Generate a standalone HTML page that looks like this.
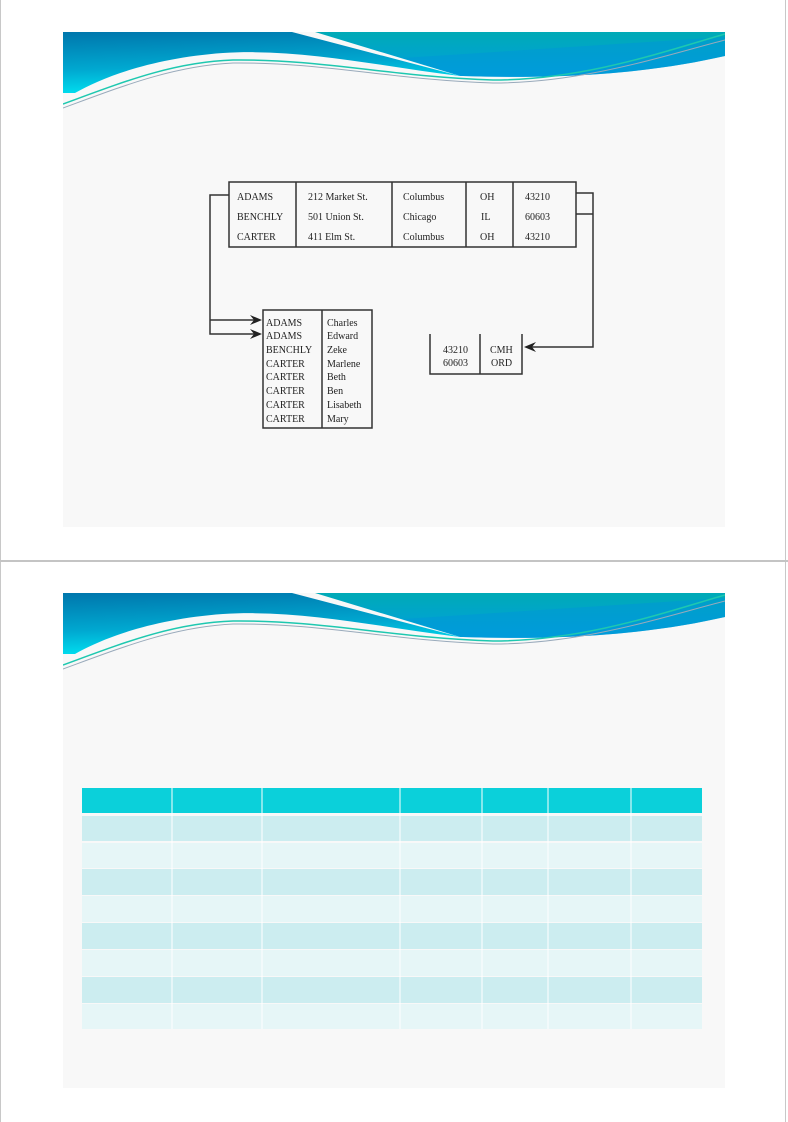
<!DOCTYPE html>
<html><head><meta charset="utf-8"><style>
html,body{margin:0;padding:0;background:#fff;}
body{width:788px;height:1122px;position:relative;overflow:hidden;font-family:"Liberation Serif",serif;}
.abs{position:absolute;}
</style></head><body>
<div class="abs" style="left:0;top:0;width:1px;height:1122px;background:#c8c8c8"></div>
<div class="abs" style="left:785px;top:0;width:1px;height:1122px;background:#c8c8c8"></div>
<div class="abs" style="left:0;top:560px;width:788px;height:2px;background:#c4c4c4"></div>

<div class="abs" style="left:63px;top:32px;width:662px;height:495px;background:#f8f8f8"></div>
<div class="abs" style="left:63px;top:593px;width:662px;height:495px;background:#f8f8f8"></div>

<svg class="abs" style="left:63px;top:32px" width="662" height="80" viewBox="0 0 662 80">
<defs>
<linearGradient id="gl" x1="0" y1="0" x2="0.2" y2="1"><stop offset="0" stop-color="#0076ac"/><stop offset="0.6" stop-color="#00a8d0"/><stop offset="1" stop-color="#00e0f0"/></linearGradient>
<linearGradient id="gr" x1="0" y1="0" x2="0" y2="1"><stop offset="0" stop-color="#00aab6"/><stop offset="1" stop-color="#00a0e0"/></linearGradient>
</defs>
<path d="M0,0 L229,0 L397,44 C320,35 240,16 160,21 C90,26 40,45 12,61 L0,61 Z" fill="url(#gl)"/>
<path d="M252,0 L662,0 L662,24 C600,38 520,48 400,44 L397,44 L252,0 Z" fill="url(#gr)"/>
<path d="M340,26 L662,5 L662,24 C600,38 520,48 400,44 Z" fill="#0096d8" opacity="0.5"/>
<path d="M0,72 C60,50 110,30 170,28 C260,27 330,45 430,48 C520,48 600,20 662,2" fill="none" stroke="#1ec8b0" stroke-width="1.5"/>
<path d="M0,76 C60,54 110,34 170,31 C260,30 330,48 430,51 C520,51 600,24 662,8" fill="none" stroke="#9ab" stroke-width="1"/>
</svg>
<svg class="abs" style="left:63px;top:593px" width="662" height="80" viewBox="0 0 662 80">
<path d="M0,0 L229,0 L397,44 C320,35 240,16 160,21 C90,26 40,45 12,61 L0,61 Z" fill="url(#gl)"/>
<path d="M252,0 L662,0 L662,24 C600,38 520,48 400,44 L397,44 L252,0 Z" fill="url(#gr)"/>
<path d="M340,26 L662,5 L662,24 C600,38 520,48 400,44 Z" fill="#0096d8" opacity="0.5"/>
<path d="M0,72 C60,50 110,30 170,28 C260,27 330,45 430,48 C520,48 600,20 662,2" fill="none" stroke="#1ec8b0" stroke-width="1.5"/>
<path d="M0,76 C60,54 110,34 170,31 C260,30 330,48 430,51 C520,51 600,24 662,8" fill="none" stroke="#9ab" stroke-width="1"/>
</svg>

<svg class="abs" style="left:0;top:0" width="788" height="560" font-family="Liberation Serif, serif" font-size="10" fill="#222">
<g stroke="#333" stroke-width="1.5" fill="none">
<rect x="229" y="182" width="347" height="65"/>
<line x1="296" y1="182" x2="296" y2="247"/><line x1="392" y1="182" x2="392" y2="247"/>
<line x1="466" y1="182" x2="466" y2="247"/><line x1="513" y1="182" x2="513" y2="247"/>
<polyline points="229,195 210,195 210,334 258,334"/>
<line x1="210" y1="320" x2="258" y2="320"/>
<polyline points="576,193 593,193 593,347 528,347"/>
<line x1="576" y1="214" x2="593" y2="214"/>
<rect x="263" y="310" width="109" height="118"/>
<line x1="322" y1="310" x2="322" y2="428"/>
<polyline points="430,334 430,374 522,374 522,334"/>
<line x1="480" y1="334" x2="480" y2="374"/>
</g>
<g fill="#222" stroke="none">
<path d="M262,320 L250,315 L254,320 L250,325 Z"/>
<path d="M262,334 L250,329 L254,334 L250,339 Z"/>
<path d="M524,347 L536,342 L532,347 L536,352 Z"/>
</g>
<text x="237" y="200">ADAMS</text><text x="308" y="200">212 Market St.</text><text x="403" y="200">Columbus</text><text x="480" y="200">OH</text><text x="525" y="200">43210</text>
<text x="237" y="220">BENCHLY</text><text x="308" y="220">501 Union St.</text><text x="403" y="220">Chicago</text><text x="481" y="220">IL</text><text x="525" y="220">60603</text>
<text x="237" y="240">CARTER</text><text x="308" y="240">411 Elm St.</text><text x="403" y="240">Columbus</text><text x="480" y="240">OH</text><text x="525" y="240">43210</text>
<g>
<text x="266" y="326">ADAMS</text><text x="327" y="326">Charles</text>
<text x="266" y="339">ADAMS</text><text x="327" y="339">Edward</text>
<text x="266" y="353">BENCHLY</text><text x="327" y="353">Zeke</text>
<text x="266" y="367">CARTER</text><text x="327" y="367">Marlene</text>
<text x="266" y="380">CARTER</text><text x="327" y="380">Beth</text>
<text x="266" y="394">CARTER</text><text x="327" y="394">Ben</text>
<text x="266" y="408">CARTER</text><text x="327" y="408">Lisabeth</text>
<text x="266" y="422">CARTER</text><text x="327" y="422">Mary</text>
</g>
<text x="443" y="353">43210</text><text x="490" y="353">CMH</text>
<text x="443" y="366">60603</text><text x="491" y="366">ORD</text>
</svg>

<svg class="abs" style="left:82px;top:788px" width="620" height="241">
<g id="cols">
<rect x="0" y="0" width="620" height="25" fill="#0bd0da"/>
<rect x="0" y="28" width="620" height="25" fill="#ccedf0"/>
<rect x="0" y="55" width="620" height="25" fill="#e6f6f7"/>
<rect x="0" y="81" width="620" height="26" fill="#ccedf0"/>
<rect x="0" y="108" width="620" height="26" fill="#e6f6f7"/>
<rect x="0" y="135" width="620" height="26" fill="#ccedf0"/>
<rect x="0" y="162" width="620" height="26" fill="#e6f6f7"/>
<rect x="0" y="189" width="620" height="26" fill="#ccedf0"/>
<rect x="0" y="216" width="620" height="25" fill="#e6f6f7"/>
</g>
<g stroke="#fff" stroke-width="1">
<line x1="90" y1="0" x2="90" y2="241"/><line x1="180" y1="0" x2="180" y2="241"/>
<line x1="318" y1="0" x2="318" y2="241"/><line x1="400" y1="0" x2="400" y2="241"/>
<line x1="466" y1="0" x2="466" y2="241"/><line x1="549" y1="0" x2="549" y2="241"/>
</g>
</svg>
</body></html>
